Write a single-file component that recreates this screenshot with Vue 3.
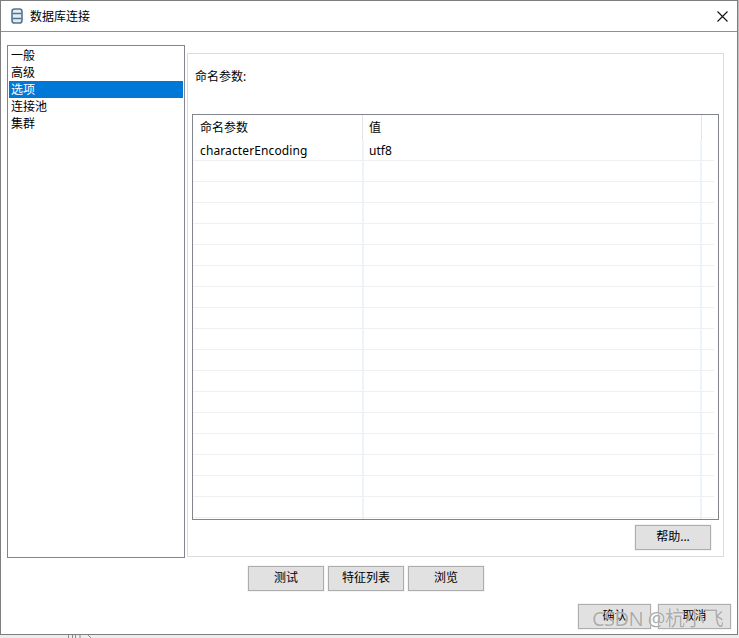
<script setup>
const navItems = ['一般', '高级', '选项', '连接池', '集群']
const rows = Array.from({ length: 18 }, (_, i) => i)
</script>

<template>
  <div class="screen">
    <div class="dialog">
      <header class="titlebar">
        <svg class="dbicon" width="12" height="16" viewBox="0 0 12 16">
          <rect x="1" y="1" width="10" height="14" rx="2.6" fill="#e6edf2" stroke="#4f7592" stroke-width="1.6" />
          <path d="M1.5 5.5h9M1.5 10.5h9" stroke="#4f7592" stroke-width="1.4" fill="none" />
        </svg>
        <span class="title">数据库连接</span>
        <svg class="close" width="11" height="11" viewBox="0 0 11 11">
          <path d="M.5.5l10 10M10.5.5l-10 10" stroke="#111" stroke-width="1.1" fill="none" />
        </svg>
      </header>
      <div class="content">
        <div class="main">
          <ul class="nav">
            <li v-for="(item, i) in navItems" :key="item" :class="{ active: i === 2 }">{{ item }}</li>
          </ul>
          <section class="panel">
            <div class="panel-label">命名参数:</div>
            <div class="table">
              <div class="thead">
                <div class="col-name">命名参数</div>
                <div class="col-value">值</div>
                <div class="col-end"></div>
              </div>
              <div class="tbody">
                <div class="row">
                  <div class="col-name latin">characterEncoding</div>
                  <div class="col-value">utf8</div>
                  <div class="col-end"></div>
                </div>
                <div v-for="r in rows" :key="r" class="row">
                  <div class="col-name"></div>
                  <div class="col-value"></div>
                  <div class="col-end"></div>
                </div>
              </div>
            </div>
            <div class="panel-actions">
              <button class="btn">帮助...</button>
            </div>
          </section>
        </div>
        <div class="mid-actions">
          <button class="btn">测试</button>
          <button class="btn">特征列表</button>
          <button class="btn">浏览</button>
        </div>
        <div class="foot-actions">
          <button class="btn small">确认</button>
          <button class="btn small">取消</button>
        </div>
      </div>
    </div>
    <svg class="behind" width="30" height="3" viewBox="0 0 30 3">
      <path d="M.5 0v3M4.5 0v3M7.5 0v3M12 0v3M20 0l3 3" stroke="#8a8a8a" stroke-width="1" fill="none" />
    </svg>
    <div class="watermark">CSDN @杭小飞</div>
  </div>
</template>

<style>
html, body { margin: 0; background: #fff; }
</style>

<style scoped>
.screen {
  position: relative;
  width: 739px;
  height: 638px;
  overflow: hidden;
  background: linear-gradient(#bdbdbd, #ededed);
  font-family: "Noto Sans", "Noto Sans CJK SC", sans-serif;
  font-size: 12px;
  color: #000;
}
.dialog {
  box-sizing: border-box;
  width: 738px;
  height: 635px;
  background: #fff;
  border: 1px solid #7e7e7e;
  display: flex;
  flex-direction: column;
}
.titlebar {
  box-sizing: border-box;
  height: 31px;
  flex: none;
  display: flex;
  align-items: center;
  padding: 0 9px 0 10px;
  border-bottom: 1px solid #8e9094;
}
.dbicon { flex: none; margin-top: -1px; }
.title { margin-left: 7px; flex: 1; font-size: 12px; line-height: 16px; position: relative; top: 1px; }
.content {
  flex: 1;
  display: flex;
  flex-direction: column;
  padding: 13px 5px 6px 6px;
}
.main { display: flex; align-items: flex-start; }
.nav {
  box-sizing: border-box;
  width: 178px;
  height: 513px;
  margin: 0;
  padding: 1px;
  list-style: none;
  border: 1px solid #82868c;
  flex: none;
}
.nav li {
  height: 17px;
  line-height: 18px;
  padding-left: 2px;
}
.nav li.active { background: #0078d7; color: #fff; }
.panel {
  box-sizing: border-box;
  width: 537px;
  height: 504px;
  margin: 8px 0 0 2px;
  padding: 14px 4px 5px 4px;
  border: 1px solid #dcdcdc;
  display: flex;
  flex-direction: column;
}
.panel-label { height: 17px; line-height: 17px; margin-left: 3px; }
.table {
  box-sizing: border-box;
  height: 406px;
  margin-top: 29px;
  border: 1px solid #82868c;
  overflow: hidden;
}
.thead, .row { display: flex; }
.thead { height: 25px; line-height: 26px; }
.row {
  box-sizing: border-box;
  height: 21px;
  line-height: 22px;
  border-bottom: 1px solid #eef0f3;
  margin-right: 4px;
}
.col-name { box-sizing: border-box; width: 169px; padding-left: 7px; flex: none; }
.latin { letter-spacing: 0.12px; }
.col-value { box-sizing: border-box; width: 339px; padding-left: 6px; flex: none; }
.col-end { flex: 1; }
.thead .col-value { border-left: 1px solid #e4e4e4; }
.thead .col-end { border-left: 1px solid #e4e4e4; }
.row .col-value { border-left: 2px solid #eef3f9; padding-left: 5px; }
.row .col-end { border-left: 2px solid #eef3f9; margin-left: -1px; }
.panel-actions { display: flex; justify-content: flex-end; padding: 5px 8px 0 0; }
.btn {
  box-sizing: border-box;
  width: 76px;
  height: 25px;
  padding: 0 0 2px;
  background: #e1e1e1;
  border: 1px solid #adadad;
  outline: 1px solid #f4f4f4;
  font: inherit;
  line-height: 16px;
  color: #000;
}
.mid-actions {
  display: flex;
  gap: 4px;
  margin-top: 8px;
  padding-left: 241px;
}
.foot-actions {
  display: flex;
  justify-content: flex-end;
  gap: 7px;
  margin-top: 13px;
  padding-right: 1px;
}
.btn.small { width: 73px; }
.behind {
  position: absolute;
  left: 68px;
  top: 635px;
}
.watermark {
  position: absolute;
  left: 592px;
  top: 606px;
  font-size: 20px;
  line-height: 26px;
  letter-spacing: -0.6px;
  color: rgba(150, 150, 150, 0.8);
  text-shadow: 0 0 1px #fff;
  pointer-events: none;
  white-space: nowrap;
}
</style>
